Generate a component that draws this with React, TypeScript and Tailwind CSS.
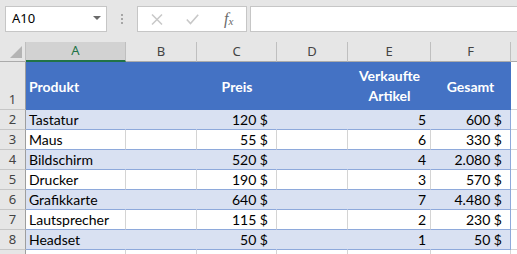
import React from "react";

type Item = { name: string; price: string; qty: string; total: string };

const items: Item[] = [
  { name: "Tastatur", price: "120 $", qty: "5", total: "600 $" },
  { name: "Maus", price: "55 $", qty: "6", total: "330 $" },
  { name: "Bildschirm", price: "520 $", qty: "4", total: "2.080 $" },
  { name: "Drucker", price: "190 $", qty: "3", total: "570 $" },
  { name: "Grafikkarte", price: "640 $", qty: "7", total: "4.480 $" },
  { name: "Lautsprecher", price: "115 $", qty: "2", total: "230 $" },
  { name: "Headset", price: "50 $", qty: "1", total: "50 $" },
];

const columns = ["A", "B", "C", "D", "E", "F"];

function RowHead({ n, tall }: { n?: number; tall?: boolean }) {
  return (
    <div
      className={`bg-[#e6e6e6] border-r border-b border-r-[#9e9e9e] border-b-[#c6c6c6] flex justify-center text-[13px] text-[#444] font-['Noto_Sans',sans-serif] ${
        tall ? "items-end" : "items-center"
      }`}
    >
      {n}
    </div>
  );
}

function FormulaBar() {
  return (
    <div className="h-[42px] flex items-start pt-[6px] pl-[5px] font-['Noto_Sans',sans-serif]">
      {/* name box */}
      <div className="w-[102px] h-[26px] bg-white border border-[#c6c6c6] flex items-center pl-[6px] pr-[5px] text-[13px] text-black">
        <span className="flex-1">A10</span>
        <svg width="8" height="5" viewBox="0 0 8 5" className="mb-[2px]">
          <path d="M0 0 H8 L4 4 Z" fill="#6a6a6a" />
        </svg>
      </div>
      {/* grip dots */}
      <div className="w-[30px] h-[26px] flex flex-col items-center justify-center gap-[2px]">
        <span className="w-[2px] h-[2px] bg-[#a6a6a6]" />
        <span className="w-[2px] h-[2px] bg-[#a6a6a6]" />
        <span className="w-[2px] h-[2px] bg-[#a6a6a6]" />
      </div>
      {/* cancel / enter / function */}
      <div className="w-[110px] h-[26px] bg-white border border-[#c6c6c6] flex items-center">
        <svg width="12" height="11" viewBox="0 0 12 11" className="ml-[13px]">
          <path d="M1 0.5 L11 10.5 M11 0.5 L1 10.5" stroke="#c8c8c8" strokeWidth="1.5" />
        </svg>
        <svg width="13" height="11" viewBox="0 0 13 11" className="ml-[23px]">
          <path d="M0.8 5.5 L4.5 9.5 L12.2 0.8" stroke="#c8c8c8" strokeWidth="1.6" fill="none" />
        </svg>
        <span className="ml-[25px] text-[16px] italic text-[#6a6a6a] font-['Liberation_Serif',serif] leading-none">
          f<span className="text-[11px] align-[-1px]">x</span>
        </span>
      </div>
      {/* formula input */}
      <div className="ml-[3px] flex-1 h-[26px] bg-white border border-r-0 border-[#c6c6c6]" />
    </div>
  );
}

export default function App() {
  return (
    <div className="w-[517px] h-[254px] overflow-hidden bg-[#e6e6e6]">
      <FormulaBar />

      <div className="grid grid-cols-[26px_100px_71px_80px_71px_83px_80px_1fr] grid-rows-[20px_48px_repeat(8,20px)] font-['Lato',sans-serif] text-[14px] text-black">
        {/* column headers */}
        <div className="bg-[#e6e6e6] border-r border-b border-r-[#bfbfbf] border-b-[#ababab] relative">
          <svg width="12" height="12" viewBox="0 0 12 12" className="absolute left-[10px] top-[4px]">
            <path d="M12 0 V12 H0 Z" fill="#b4b4b4" />
          </svg>
        </div>
        {columns.map((c) =>
          c === "A" ? (
            <div
              key={c}
              className="bg-[#d2d2d2] border-r border-r-[#bfbfbf] border-b-2 border-b-[#217346] flex items-center justify-center text-[13px] text-[#217346] font-['Noto_Sans',sans-serif]"
            >
              {c}
            </div>
          ) : (
            <div
              key={c}
              className="bg-[#e6e6e6] border-r border-b border-r-[#bfbfbf] border-b-[#ababab] flex items-center justify-center text-[13px] text-[#444] font-['Noto_Sans',sans-serif]"
            >
              {c}
            </div>
          )
        )}
        <div className="bg-[#e6e6e6] border-b border-b-[#ababab]" />

        {/* table header, row 1 */}
        <RowHead n={1} tall />
        <div className="bg-[#4472c4] flex items-center pl-[3px] font-bold text-white">Produkt</div>
        <div className="bg-[#4472c4]" />
        <div className="bg-[#4472c4] flex items-center justify-center font-bold text-white">Preis</div>
        <div className="bg-[#4472c4]" />
        <div className="bg-[#4472c4] flex items-center justify-center text-center font-bold text-white leading-[20px]">
          Verkaufte
          <br />
          Artikel
        </div>
        <div className="bg-[#4472c4] border-r border-r-[#4472c4] flex items-center justify-center font-bold text-white">
          Gesamt
        </div>
        <div className="bg-white border-b border-b-[#d4d4d4]" />

        {/* data rows */}
        {items.map((it, i) => {
          const banded = i % 2 === 0;
          const cell = banded
            ? "bg-[#d9e1f2] border-r border-b border-r-[#d9e1f2] border-b-[#8ea9db]"
            : "bg-white border-r border-b border-r-[#d4d4d4] border-b-[#8ea9db]";
          const last = banded
            ? "bg-[#d9e1f2] border-r border-b border-r-[#8ea9db] border-b-[#8ea9db]"
            : "bg-white border-r border-b border-r-[#8ea9db] border-b-[#8ea9db]";
          return (
            <React.Fragment key={it.name}>
              <RowHead n={i + 2} />
              <div className={`${cell} flex items-center pl-[3px]`}>{it.name}</div>
              <div className={cell} />
              <div className={`${cell} flex items-center justify-end pr-[8px]`}>{it.price}</div>
              <div className={cell} />
              <div className={`${cell} flex items-center justify-end pr-[4px]`}>{it.qty}</div>
              <div className={`${last} flex items-center justify-end pr-[8px]`}>{it.total}</div>
              <div className="bg-white border-b border-b-[#d4d4d4]" />
            </React.Fragment>
          );
        })}

        {/* row 9, mostly below the fold */}
        <RowHead />
        {columns.map((c) => (
          <div key={c} className="bg-white border-r border-r-[#d4d4d4]" />
        ))}
        <div className="bg-white" />
      </div>
    </div>
  );
}
